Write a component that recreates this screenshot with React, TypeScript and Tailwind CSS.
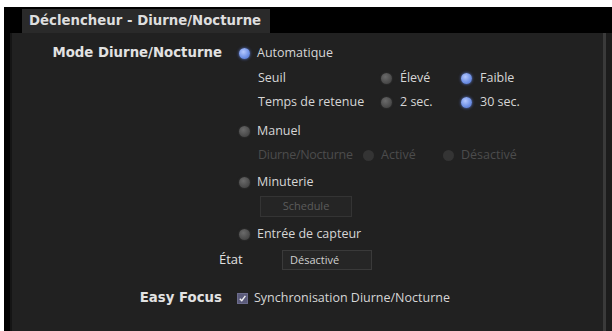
const bold = { fontFamily: '"DejaVu Sans", Verdana, sans-serif' };
const reg = { fontFamily: '"Open Sans", "DejaVu Sans", sans-serif' };

const Radio = ({ on = false, dim = false }: { on?: boolean; dim?: boolean }) => (
  <span
    className={
      "inline-block w-[11px] h-[11px] rounded-full shrink-0 " +
      (on
        ? "bg-[radial-gradient(circle_at_40%_35%,#b4c8ff,#6c8ee4_60%,#4e6cc0)] shadow-[0_0_3px_#5c7ad6]"
        : dim
        ? "bg-[#343434]"
        : "bg-[radial-gradient(circle_at_40%_35%,#6a6a6a,#4a4a4a_65%,#3a3a3a)] shadow-[0_0_2px_#3a3a3a]")
    }
  />
);

const Opt = ({ on, label, w }: { on?: boolean; label: string; w: string }) => (
  <div className={"flex items-center gap-[8px] " + w}>
    <Radio on={on} />
    <span>{label}</span>
  </div>
);

export default function App() {
  return (
    <div className="w-[612px] h-[331px] bg-white overflow-hidden pt-[7px] pl-[4px]">
      <div className="h-full bg-black flex flex-col">
        <div className="h-[26px] pl-[18px] pt-[2px] flex">
          <div
            className="w-[248px] h-full bg-[#2a2a2a] px-[7px] flex items-center text-[13.3px] font-bold text-[#dedede]"
            style={bold}
          >
            Déclencheur - Diurne/Nocturne
          </div>
        </div>
        <div className="flex-1 flex">
          <div className="w-[6px] bg-black" />
          <div className="w-[2px] bg-[#151515]" />
          <div className="flex-1 bg-[#212121] text-[12.5px] text-[#d6d6d6]" style={reg}>
            <div className="flex items-center h-[20px] mt-[10px]">
              <div className="w-[210px] text-right text-[13.3px] font-bold text-[#e2e2e2]" style={bold}>
                Mode Diurne/Nocturne
              </div>
              <div className="ml-[17px] flex items-center gap-[7px]">
                <Radio on />
                <span>Automatique</span>
              </div>
            </div>
            <div className="pl-[246px] flex flex-col">
              <div className="flex items-center h-[20px] mt-[5px]">
                <span className="w-[123px]">Seuil</span>
                <Opt label="Élevé" w="w-[80px]" />
                <Opt on label="Faible" w="w-[80px]" />
              </div>
              <div className="flex items-center h-[20px] mt-[4px]">
                <span className="w-[123px]">Temps de retenue</span>
                <Opt label="2 sec." w="w-[80px]" />
                <Opt on label="30 sec." w="w-[80px]" />
              </div>
            </div>
            <div className="pl-[227px] flex flex-col">
              <div className="flex items-center gap-[7px] h-[20px] mt-[9px]">
                <Radio />
                <span>Manuel</span>
              </div>
              <div className="flex items-center h-[20px] mt-[4px] pl-[19px] text-[#4c4c4c]">
                <span className="w-[105px] tracking-[-0.3px]">Diurne/Nocturne</span>
                <div className="w-[80px] flex items-center gap-[7px]">
                  <Radio dim />
                  <span>Activé</span>
                </div>
                <div className="flex items-center gap-[7px]">
                  <Radio dim />
                  <span>Désactivé</span>
                </div>
              </div>
              <div className="flex items-center gap-[7px] h-[20px] mt-[7px]">
                <Radio />
                <span>Minuterie</span>
              </div>
              <div className="mt-[4px] ml-[21px] w-[92px] h-[21px] border border-[#343434] bg-[#252525] flex items-center justify-center text-[11px] text-[#5c5c5c]">
                Schedule
              </div>
              <div className="flex items-center gap-[7px] h-[20px] mt-[7px]">
                <Radio />
                <span>Entrée de capteur</span>
              </div>
            </div>
            <div className="flex items-center h-[20px] mt-[6px] pl-[207px]">
              <span className="w-[63px] text-[13px] text-[#e0e0e0]">État</span>
              <div className="w-[90px] h-[20px] bg-[#262626] border border-[#3a3a3a] px-[7px] flex items-center text-[11px] text-[#d0d0d0]">
                Désactivé
              </div>
            </div>
            <div className="flex items-center h-[20px] mt-[18px]">
              <div className="w-[210px] text-right text-[13.3px] font-bold text-[#e2e2e2]" style={bold}>
                Easy Focus
              </div>
              <div className="ml-[15px] flex items-center gap-[6px]">
                <span className="w-[11px] h-[11px] bg-[#5a5a7a] border border-[#6c6c8c] flex items-center justify-center">
                  <svg width="9" height="9" viewBox="0 0 10 10">
                    <path d="M2 5.2 L4.2 7.5 L8.2 2" stroke="#f0f0f0" strokeWidth="1.6" fill="none" />
                  </svg>
                </span>
                <span>Synchronisation Diurne/Nocturne</span>
              </div>
            </div>
          </div>
          <div className="w-[3px] bg-[#3a3a3a]" />
          <div className="w-[6px] bg-[#1c1c1c]" />
        </div>
      </div>
    </div>
  );
}
